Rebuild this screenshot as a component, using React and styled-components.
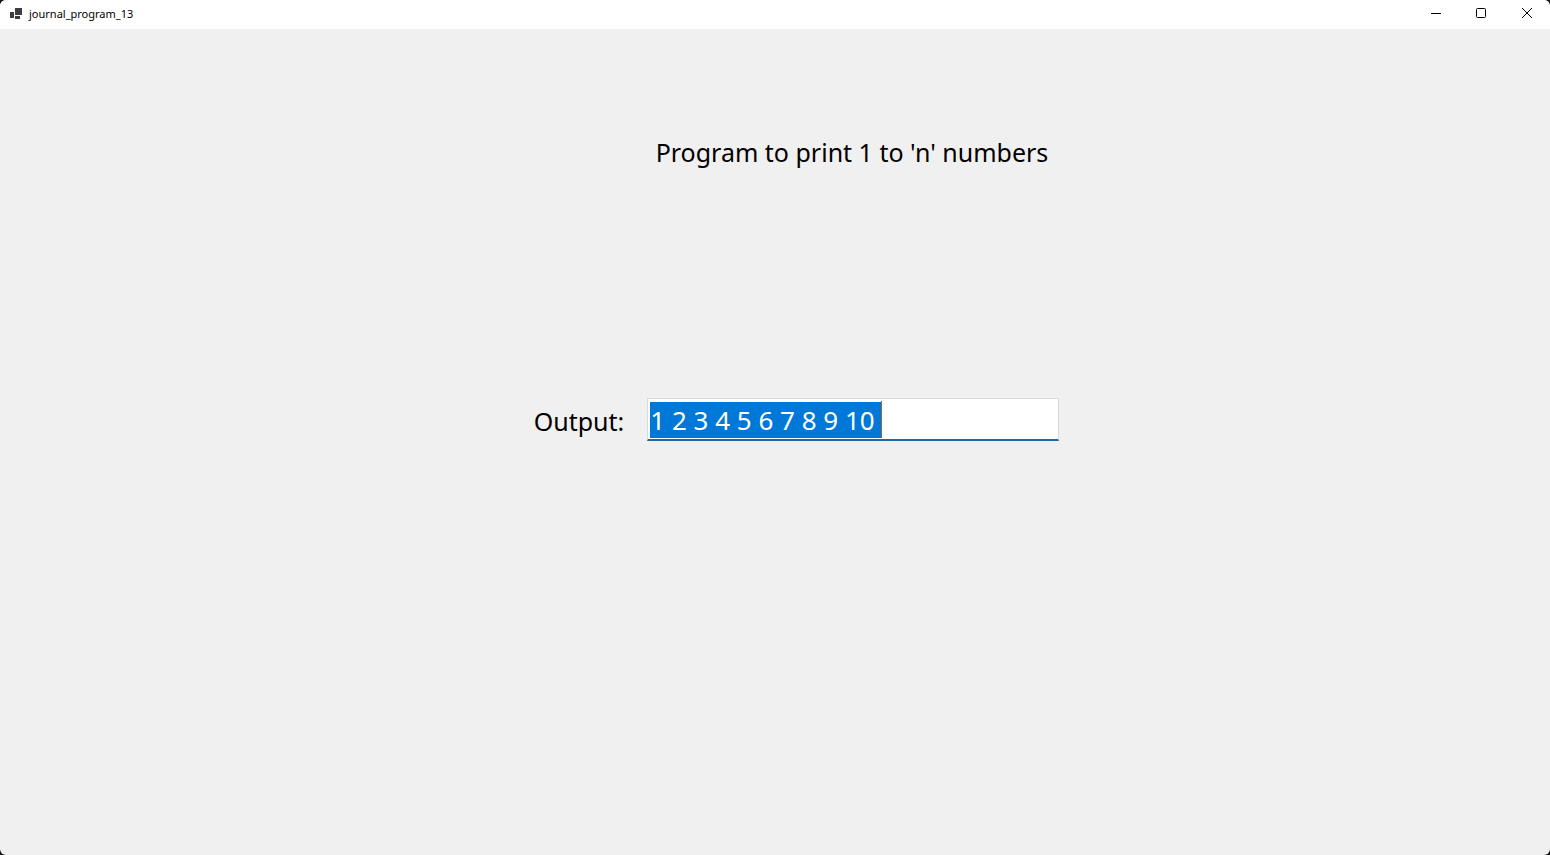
import React, { useEffect, useRef } from "react";
import styled, { createGlobalStyle } from "styled-components";

const GlobalStyle = createGlobalStyle`
  *, *::before, *::after { box-sizing: border-box; }
  body { margin: 0; background: #161616; }
`;

const Window = styled.div`
  display: flex;
  flex-direction: column;
  min-height: 100vh;
  overflow: hidden;
  border-radius: 6px;
  background: #f0f0f0;
  color: #000;
  font-family: "Noto Sans", "Open Sans", sans-serif;
`;

const TitleBar = styled.header`
  display: flex;
  align-items: flex-start;
  justify-content: space-between;
  height: 29px;
  background: #fff;
`;

const Caption = styled.div`
  display: flex;
  align-items: center;
  gap: 6px;
  height: 27px;
  padding-left: 10px;
`;

const Title = styled.h1`
  margin: 0;
  font-size: 11px;
  line-height: 16px;
  font-weight: 400;
`;

const WindowControls = styled.div`
  display: flex;
`;

const ControlButton = styled.button`
  display: flex;
  align-items: center;
  justify-content: center;
  width: 46px;
  height: 26px;
  padding: 0;
  border: 0;
  background: transparent;
  color: #000;
`;

const Form = styled.main`
  display: flex;
  flex-direction: column;
  align-items: center;
  gap: 228px;
  padding-top: 105px;
`;

const Heading = styled.h2`
  margin: 0;
  padding-left: 154px;
  font-size: 25px;
  line-height: 36px;
  font-weight: 400;
`;

const Field = styled.div`
  display: flex;
  align-items: flex-end;
  gap: 23px;
  padding-left: 43px;
`;

const Label = styled.label`
  font-size: 25px;
  line-height: 40px;
`;

const InputFrame = styled.div`
  position: relative;
  width: 412px;
`;

const Output = styled.input`
  display: block;
  width: 100%;
  height: 43px;
  padding: 2px 2px 1px;
  border: 1px solid #d9d9d9;
  border-bottom: 2px solid #1a6aa8;
  border-radius: 0;
  outline: none;
  background: #fff;
  color: #000;
  font: inherit;
  font-size: 26px;
  line-height: 37px;

  &::selection {
    background: #0078d7;
    color: #fff;
  }
`;

const Caret = styled.span`
  position: absolute;
  top: 3px;
  left: 234px;
  width: 1px;
  height: 37px;
  background: #8a6a50;
`;

function AppIcon() {
  return (
    <svg width="13" height="12" viewBox="0 0 13 12" fill="#3b3d3e" aria-hidden="true">
      <path d="M5 0h7v7H5zM0 4h4v6H0zM5 8h5v3H5z" />
    </svg>
  );
}

function ControlIcon({ children }) {
  return (
    <svg width="12" height="12" viewBox="0 0 12 12" fill="none" stroke="currentColor" aria-hidden="true">
      {children}
    </svg>
  );
}

export default function App() {
  const output = useRef(null);

  useEffect(() => {
    output.current.focus();
    output.current.select();
  }, []);

  return (
    <>
      <GlobalStyle />
      <Window>
        <TitleBar>
          <Caption>
            <AppIcon />
            <Title>journal_program_13</Title>
          </Caption>
          <WindowControls>
            <ControlButton aria-label="Minimize">
              <ControlIcon><path d="M2 6.5h10" /></ControlIcon>
            </ControlButton>
            <ControlButton aria-label="Maximize">
              <ControlIcon><rect x="1.5" y="1.5" width="9" height="9" rx="1" /></ControlIcon>
            </ControlButton>
            <ControlButton aria-label="Close">
              <ControlIcon><path d="M1 1l10 10M11 1L1 11" /></ControlIcon>
            </ControlButton>
          </WindowControls>
        </TitleBar>
        <Form>
          <Heading>Program to print 1 to 'n' numbers</Heading>
          <Field>
            <Label htmlFor="output">Output:</Label>
            <InputFrame>
              <Output id="output" ref={output} type="text" defaultValue="1 2 3 4 5 6 7 8 9 10 " />
              <Caret />
            </InputFrame>
          </Field>
        </Form>
      </Window>
    </>
  );
}
